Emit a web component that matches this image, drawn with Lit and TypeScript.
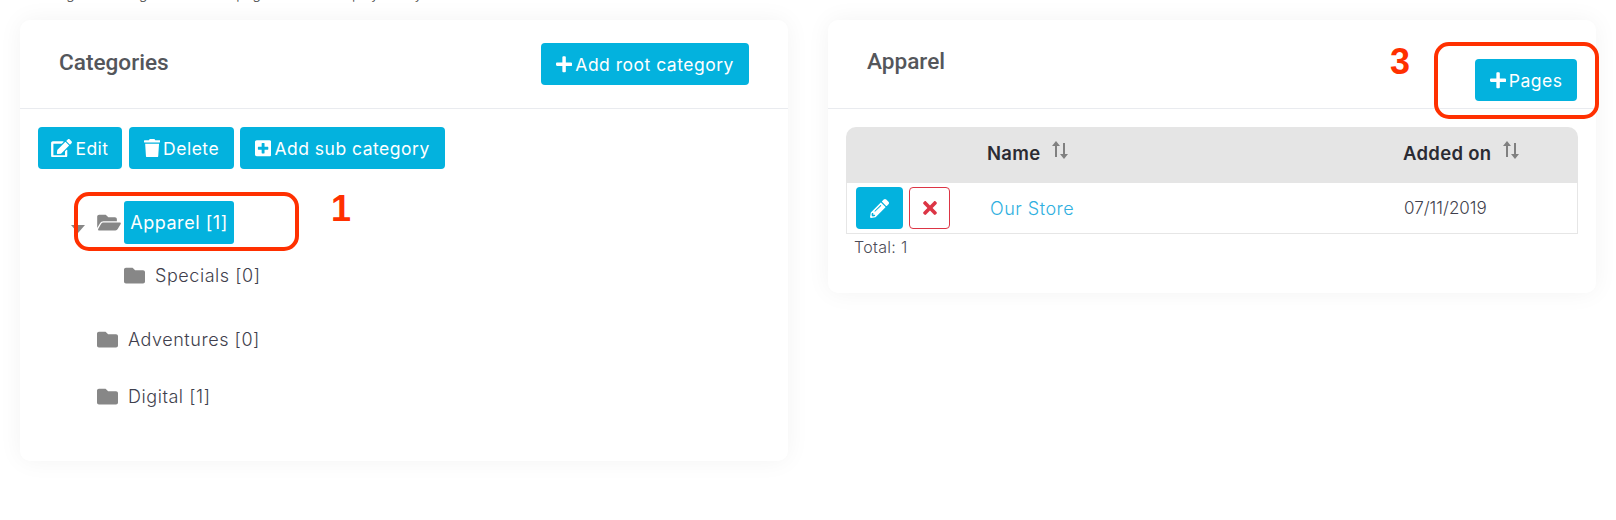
import { LitElement, html, css, svg } from 'lit';
import { customElement } from 'lit/decorators.js';

const icons = {
  plus: svg`<path d="M416 208H272V64c0-18-14-32-32-32h-32c-18 0-32 14-32 32v144H32c-18 0-32 14-32 32v32c0 18 14 32 32 32h144v144c0 18 14 32 32 32h32c18 0 32-14 32-32V304h144c18 0 32-14 32-32v-32c0-18-14-32-32-32z"/>`,
  edit: svg`<path d="M402.6 83.2l90.2 90.2c3.8 3.8 3.8 10 0 13.8L274.4 405.6l-92.8 10.3c-12.4 1.4-22.9-9.1-21.5-21.5l10.3-92.8L388.8 83.2c3.8-3.8 10-3.8 13.8 0zm162-22.9l-48.8-48.8c-15.2-15.2-39.9-15.2-55.2 0l-35.4 35.4c-3.8 3.8-3.8 10 0 13.8l90.2 90.2c3.8 3.8 10 3.8 13.8 0l35.4-35.4c15.2-15.3 15.2-40 0-55.2zM384 346.2V448H64V128h229.8c3.2 0 6.2-1.3 8.5-3.5l40-40c7.6-7.6 2.2-20.5-8.5-20.5H48C21.5 64 0 85.5 0 112v352c0 26.5 21.5 48 48 48h352c26.5 0 48-21.5 48-48V306.2c0-10.7-12.9-16-20.5-8.5l-40 40c-2.2 2.3-3.5 5.3-3.5 8.5z"/>`,
  trash: svg`<path d="M432 32H312l-9.4-18.7A24 24 0 0 0 281.1 0H166.8a23.7 23.7 0 0 0-21.4 13.3L136 32H16A16 16 0 0 0 0 48v32a16 16 0 0 0 16 16h416a16 16 0 0 0 16-16V48a16 16 0 0 0-16-16zM53.2 467a48 48 0 0 0 47.9 45h245.8a48 48 0 0 0 47.9-45L416 128H32z"/>`,
  plusSquare: svg`<path d="M400 32H48C21.5 32 0 53.5 0 80v352c0 26.5 21.5 48 48 48h352c26.5 0 48-21.5 48-48V80c0-26.5-21.5-48-48-48zm-32 252c0 6.6-5.4 12-12 12h-92v92c0 6.6-5.4 12-12 12h-56c-6.6 0-12-5.4-12-12v-92H92c-6.6 0-12-5.4-12-12v-56c0-6.6 5.4-12 12-12h92v-92c0-6.6 5.4-12 12-12h56c6.6 0 12 5.4 12 12v92h92c6.6 0 12 5.4 12 12v56z"/>`,
  folder: svg`<path d="M464 128H272l-64-64H48C21.5 64 0 85.5 0 112v288c0 26.5 21.5 48 48 48h416c26.5 0 48-21.5 48-48V176c0-26.5-21.5-48-48-48z"/>`,
  folderOpen: svg`<path d="M572.7 292.1L500.3 416.2A64 64 0 0 1 445 448H45c-18.5 0-30.1-20.1-20.7-36.1l72.4-124.2A64 64 0 0 1 152 256h400c18.5 0 30.1 20.1 20.7 36.1zM152 224h328v-48c0-26.5-21.5-48-48-48H272l-64-64H48C21.5 64 0 85.5 0 112v278l69.1-118.4C86.2 242.3 118 224 152 224z"/>`,
  pencil: svg`<path d="M497.9 142.1l-46.1 46.1c-4.7 4.7-12.3 4.7-17 0l-111-111c-4.7-4.7-4.7-12.3 0-17l46.1-46.1c18.7-18.7 49.1-18.7 67.9 0l60.1 60.1c18.8 18.7 18.8 49.1 0 67.9zM284.2 99.8L21.6 362.4.4 483.9c-2.9 16.4 11.4 30.6 27.8 27.8l121.5-21.3 262.6-262.6c4.7-4.7 4.7-12.3 0-17l-111-111c-4.8-4.7-12.4-4.7-17.1 0zM124.1 339.9c-5.5-5.5-5.5-14.3 0-19.8l154-154c5.5-5.5 14.3-5.5 19.8 0s5.5 14.3 0 19.8l-154 154c-5.5 5.5-14.3 5.5-19.8 0zM88 424h48v36.3l-64.5 11.3-31.1-31.1L51.7 376H88v48z"/>`,
  times: svg`<path d="M242.7 256l100.1-100.1c12.3-12.3 12.3-32.2 0-44.5l-22.2-22.2c-12.3-12.3-32.2-12.3-44.5 0L176 189.3 75.9 89.2c-12.3-12.3-32.2-12.3-44.5 0L9.2 111.4c-12.3 12.3-12.3 32.2 0 44.5L109.3 256 9.2 356.1c-12.3 12.3-12.3 32.2 0 44.5l22.2 22.2c12.3 12.3 32.2 12.3 44.5 0L176 322.7l100.1 100.1c12.3 12.3 32.2 12.3 44.5 0l22.2-22.2c12.3-12.3 12.3-32.2 0-44.5L242.7 256z"/>`,
};

const icon = (name: keyof typeof icons, vb: string, cls = '') =>
  html`<svg class="ico ${cls}" viewBox="${vb}" fill="currentColor">${icons[name]}</svg>`;

const sortIcon = html`<svg class="sort" viewBox="0 0 18 18" fill="currentColor">
  <path d="M5 0 1 5h3v11h2V5h3z" /><path d="M13 18l4-5h-3V2h-2v11H9z" />
</svg>`;

@customElement('app-root')
export class AppRoot extends LitElement {
  static styles = css`
    :host {
      display: block;
      position: relative;
      width: 1616px;
      height: 520px;
      overflow: hidden;
      background: #fff;
      font-family: Inter, "Noto Sans", sans-serif;
      color: #444;
    }
    .intro {
      height: 20px;
      margin: 0;
      padding-left: 30px;
      box-sizing: border-box;
      font-size: 14px;
      font-weight: 300;
      line-height: 20px;
      transform: translateY(-16px);
    }
    .cols {
      display: flex;
      gap: 40px;
      align-items: flex-start;
      padding-left: 20px;
    }
    .card {
      background: #fff;
      border-radius: 10px;
      box-shadow: 0 0 24px rgba(0, 0, 0, 0.05);
      box-sizing: border-box;
    }
    .left { width: 768px; height: 441px; }
    .right { width: 768px; height: 273px; }
    .head {
      display: flex;
      justify-content: space-between;
      height: 89px;
      box-sizing: border-box;
      border-bottom: 1px solid #e9ebef;
    }
    .left .head { padding: 23px 39px 0 39px; }
    .right .head { padding: 0 19px 0 39px; }
    h2 {
      margin: 0;
      font-family: Roboto, sans-serif;
      font-size: 22.6px;
      font-weight: 500;
      color: #54565b;
    }
    .left h2 { line-height: 40px; }
    .right h2 { line-height: 84px; }
    .btn {
      display: inline-flex;
      align-items: center;
      justify-content: center;
      gap: 3px;
      box-sizing: border-box;
      height: 42px;
      border-radius: 4px;
      background: #03b2de;
      color: #fff;
      font-size: 17.5px;
      letter-spacing: 0.5px;
      white-space: nowrap;
    }
    .right .btn { margin-top: 39px; width: 102px; }
    .add-root { width: 208px; }
    .ico { display: block; flex: none; }
    .btn .ico { width: 16.2px; height: 18.5px; }
    .btn .ico.wide { width: 21px; }
    .body { padding: 18px 18px 0; }
    .toolbar { display: flex; gap: 7px; }
    .toolbar .btn:nth-child(1) { width: 84px; }
    .toolbar .btn:nth-child(2) { width: 105px; }
    .toolbar .btn:nth-child(3) { width: 205px; margin-left: -1px; }
    .tree {
      display: flex;
      flex-direction: column;
      padding-left: 59px;
      margin-top: 32px;
      font-size: 18px;
      letter-spacing: 0.55px;
      font-weight: 300;
      color: #3f3f4d;
    }
    .node { display: flex; align-items: center; gap: 10px; height: 43px; position: relative; }
    .node .ico { width: 21px; height: 21px; color: #878787; }
    .node .ico.open { width: 24px; height: 21px; }
    .apparel { gap: 3px; }
    .caret {
      position: absolute;
      left: -26px;
      top: 24px;
      width: 0;
      height: 0;
      border: 7.5px solid transparent;
      border-top: 8px solid #878787;
      border-bottom: 0;
    }
    .selected {
      display: flex;
      align-items: center;
      justify-content: center;
      width: 110px;
      height: 43px;
      border-radius: 3px;
      background: #03b2de;
      color: #fff;
      font-weight: 400;
    }
    .sub { margin: 10px 0 0 27px; }
    .adventures { margin-top: 21px; }
    .digital { margin-top: 14px; }
    table {
      width: 732px;
      border-collapse: separate;
      border-spacing: 0;
      font-size: 17px;
    }
    th {
      height: 56px;
      background: #e5e5e5;
      text-align: left;
      font-weight: 600;
      color: #2b2b33;
      font-size: 18.5px;
      letter-spacing: 0.3px;
      padding: 0 0 6px;
      box-sizing: border-box;
    }
    th:first-child { border-radius: 10px 0 0 0; width: 141px; }
    th:last-child { border-radius: 0 10px 0 0; width: 176px; padding-left: 1px; }
    td {
      height: 50px;
      padding: 0;
      font-weight: 300;
      color: #3f3f4d;
      border-bottom: 1px solid #e6e6e6;
    }
    td:first-child { border-left: 1px solid #e6e6e6; }
    td:last-child { border-right: 1px solid #e6e6e6; padding-left: 2px; }
    td:nth-child(2) { padding-left: 3px; }
    .sort { display: inline-block; width: 18px; height: 18px; margin-left: 11px; color: #808080; vertical-align: 1px; }
    .row-actions { display: flex; gap: 6px; padding-left: 9px; }
    .row-btn {
      display: flex;
      align-items: center;
      justify-content: center;
      height: 42px;
      box-sizing: border-box;
      border-radius: 4px;
    }
    .row-btn.edit { width: 47px; background: #03b2de; color: #fff; }
    .row-btn.del { width: 41px; border: 1px solid #dc3545; color: #dc3545; }
    .row-btn .ico { width: 19px; height: 19px; }
    .row-btn.del .ico { width: 14px; height: 20px; }
    a { color: #2fb0e0; text-decoration: none; font-size: 18px; letter-spacing: 0.5px; }
    .total { margin: 2px 0 0 8px; font-size: 16px; letter-spacing: 0.3px; font-weight: 300; color: #4c4c58; line-height: 22px; }

    .mark {
      position: absolute;
      box-sizing: border-box;
      border: 4px solid #ff3000;
      border-radius: 15px;
    }
    .mark.one { left: 74px; top: 192px; width: 225px; height: 59px; }
    .mark.three { left: 1434px; top: 42px; width: 165px; height: 77px; }
    .num {
      position: absolute;
      font-family: "Liberation Sans", sans-serif;
      font-weight: 700;
      font-size: 36px;
      line-height: 36px;
      color: #ff3000;
    }
    .num.one { left: 331px; top: 191px; }
    .num.three { left: 1390px; top: 44px; }
  `;

  render() {
    return html`
      <p class="intro">Manage the categories and the pages that are displayed in your store</p>
      <div class="cols">
        <section class="card left">
          <div class="head">
            <h2>Categories</h2>
            <span class="btn add-root">${icon('plus', '0 0 448 512')}Add root category</span>
          </div>
          <div class="body">
            <div class="toolbar">
              <span class="btn">${icon('edit', '0 0 576 512', 'wide')}Edit</span>
              <span class="btn">${icon('trash', '0 0 448 512')}Delete</span>
              <span class="btn">${icon('plusSquare', '0 0 448 512')}Add sub category</span>
            </div>
            <div class="tree">
              <div class="node apparel">
                <span class="caret"></span>
                ${icon('folderOpen', '0 0 576 512', 'open')}
                <span class="selected">Apparel [1]</span>
              </div>
              <div class="node sub">${icon('folder', '0 0 512 512')}Specials [0]</div>
              <div class="node adventures">${icon('folder', '0 0 512 512')}Adventures [0]</div>
              <div class="node digital">${icon('folder', '0 0 512 512')}Digital [1]</div>
            </div>
          </div>
        </section>
        <section class="card right">
          <div class="head">
            <h2>Apparel</h2>
            <span class="btn">${icon('plus', '0 0 448 512')}Pages</span>
          </div>
          <div class="body">
            <table>
              <thead>
                <tr><th></th><th>Name${sortIcon}</th><th>Added on${sortIcon}</th></tr>
              </thead>
              <tbody>
                <tr>
                  <td>
                    <div class="row-actions">
                      <span class="row-btn edit">${icon('pencil', '0 0 512 512')}</span>
                      <span class="row-btn del">${icon('times', '0 0 352 512')}</span>
                    </div>
                  </td>
                  <td><a>Our Store</a></td>
                  <td>07/11/2019</td>
                </tr>
              </tbody>
            </table>
            <div class="total">Total: 1</div>
          </div>
        </section>
      </div>
      <div class="mark one"></div>
      <div class="mark three"></div>
      <div class="num one">1</div>
      <div class="num three">3</div>
    `;
  }
}
